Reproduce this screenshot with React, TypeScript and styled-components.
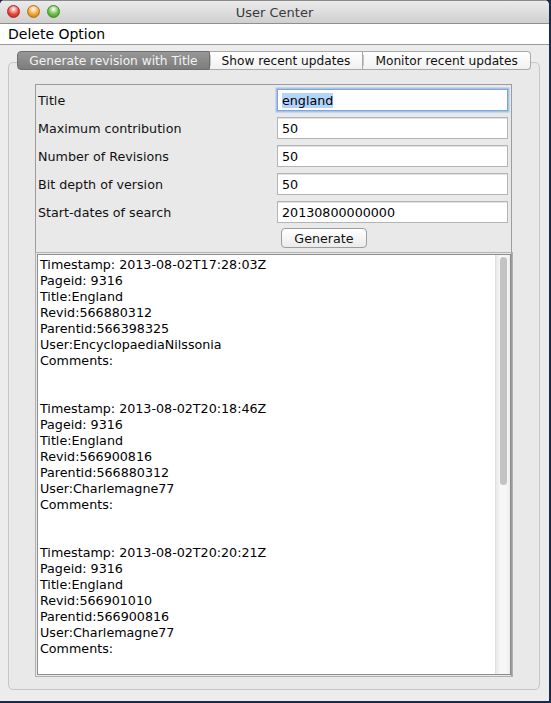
import React from 'react';
import styled, { createGlobalStyle } from 'styled-components';

const GlobalStyle = createGlobalStyle`
  html, body {
    margin: 0;
    padding: 0;
    background: #1b2a4a;
  }
  body {
    width: 551px;
    height: 703px;
    overflow: hidden;
    font-family: "DejaVu Sans", "Liberation Sans", sans-serif;
  }
`;

const Window = styled.div`
  width: 549px;
  height: 701px;
  display: flex;
  flex-direction: column;
  background: #ececec;
  border-radius: 5px 5px 0 0;
  overflow: hidden;
`;

const TitleBar = styled.div`
  height: 22px;
  flex: none;
  display: flex;
  align-items: center;
  justify-content: center;
  position: relative;
  background: linear-gradient(#ebebeb, #cfcfcf);
  border-top: 1px solid #8a8a8a;
  border-bottom: 1px solid #8f8f8f;
  font-size: 13px;
  color: #3a3a3a;
`;

const Lights = styled.div`
  position: absolute;
  left: 7px;
  top: 4px;
  display: flex;
  gap: 7px;
`;

const Light = styled.span<{ $c: string; $d: string }>`
  width: 13px;
  height: 13px;
  border-radius: 50%;
  box-sizing: border-box;
  border: 1px solid ${p => p.$d};
  background: radial-gradient(circle at 50% 30%, #fff 0%, ${p => p.$c} 55%, ${p => p.$d} 100%);
`;

const MenuBar = styled.div`
  height: 20px;
  flex: none;
  background: #fff;
  border-bottom: 1px solid #9a9a9a;
  display: flex;
  align-items: center;
  padding-left: 8px;
  font-size: 14px;
  color: #000;
`;

const Body = styled.div`
  flex: 1;
  min-height: 0;
  display: flex;
  flex-direction: column;
  padding: 6px 9px 11px 8px;
`;

const Tabs = styled.div`
  display: flex;
  align-self: center;
  position: relative;
  z-index: 1;
  height: 19px;
  flex: none;
`;

const Tab = styled.div<{ $active?: boolean; $first?: boolean; $last?: boolean }>`
  display: flex;
  align-items: center;
  padding: 0 ${p => (p.$first ? 11 : 12)}px;
  font-size: 12.2px;
  box-sizing: border-box;
  border: 1px solid ${p => (p.$active ? '#6e6e6e' : '#a9a9a9')};
  border-left: ${p => (p.$first ? undefined : 'none')};
  border-radius: ${p => (p.$first ? '4px 0 0 4px' : p.$last ? '0 4px 4px 0' : '0')};
  background: ${p => (p.$active ? 'linear-gradient(#979797, #7d7d7d)' : 'linear-gradient(#ffffff, #f1f1f1)')};
  color: ${p => (p.$active ? '#f2f2f2' : '#111')};
  position: relative;
  &::before {
    content: '';
    display: ${p => (p.$first || p.$active ? 'none' : 'block')};
    position: absolute;
    left: 0;
    top: 3px;
    bottom: 3px;
    width: 1px;
    background: #c4c4c4;
  }
`;

const TabPane = styled.div`
  flex: 1;
  min-height: 0;
  margin-top: -8px;
  border: 1px solid #c6c6c6;
  border-radius: 5px;
  background: #e9e9e9;
  display: flex;
  flex-direction: column;
  padding: 21px 27px 12px 26px;
`;

const Panel = styled.div`
  flex: 1;
  min-height: 0;
  border: 1px solid #9c9c9c;
  display: flex;
  flex-direction: column;
  padding: 4px 0 0 1px;
`;

const Form = styled.div`
  display: grid;
  grid-template-columns: 240px 231px;
  row-gap: 6px;
  padding-right: 4px;
  align-items: center;
`;

const Label = styled.div`
  font-size: 12.7px;
  color: #111;
  padding-left: 1px;
`;

const Input = styled.div<{ $focus?: boolean }>`
  height: 22px;
  box-sizing: border-box;
  background: #fff;
  border: 1px solid ${p => (p.$focus ? '#7ea6d6' : '#b4b4b4')};
  box-shadow: ${p => (p.$focus ? '0 0 0 1.5px #a6c4ea' : 'inset 0 1px 0 #e2e2e2')};
  display: flex;
  align-items: center;
  padding-left: 4px;
  font-size: 12.7px;
  color: #000;
`;

const Selected = styled.span`
  background: #b3d4fd;
`;

const ButtonRow = styled.div`
  display: flex;
  padding-left: 244px;
  margin-top: 5px;
`;

const Button = styled.div`
  width: 86px;
  height: 20px;
  box-sizing: border-box;
  border: 1px solid #9d9d9d;
  border-radius: 4px;
  background: linear-gradient(#ffffff, #ebebeb);
  display: flex;
  align-items: center;
  justify-content: center;
  font-size: 12.7px;
  color: #111;
`;

const TextArea = styled.div`
  flex: 1;
  min-height: 0;
  margin: 6px 0 1px;
  border: 1px solid #8c8c8c;
  outline: 1px solid #b0b0b0;
  outline-offset: 1px;
  background: #fff;
  display: flex;
  overflow: hidden;
`;

const Log = styled.div`
  flex: 1;
  min-height: 0;
  padding: 2px 0 0 2px;
  font-size: 12.7px;
  line-height: 16px;
  color: #000;
  white-space: pre;
  overflow: hidden;
`;

const Track = styled.div`
  width: 15px;
  flex: none;
  background: linear-gradient(90deg, #e8e8e8, #f7f7f7 30%, #f7f7f7 70%, #ededed);
  border-left: 1px solid #e0e0e0;
  padding: 2px 3px 0 4px;
  box-sizing: border-box;
`;

const Thumb = styled.div`
  height: 228px;
  border-radius: 4px;
  background: #c3c3c3;
`;

const records = [
  ['2013-08-02T17:28:03Z', '566880312', '566398325', 'EncyclopaediaNilssonia'],
  ['2013-08-02T20:18:46Z', '566900816', '566880312', 'Charlemagne77'],
  ['2013-08-02T20:20:21Z', '566901010', '566900816', 'Charlemagne77'],
];

const fields = [
  { label: 'Title', value: 'england', focus: true },
  { label: 'Maximum contribution', value: '50' },
  { label: 'Number of Revisions', value: '50' },
  { label: 'Bit depth of version', value: '50' },
  { label: 'Start-dates of search', value: '20130800000000' },
];

const App: React.FC = () => {
  const logText = records
    .map(([ts, revid, parent, user]) =>
      [
        `Timestamp: ${ts}`,
        'Pageid: 9316',
        'Title:England',
        `Revid:${revid}`,
        `Parentid:${parent}`,
        `User:${user}`,
        'Comments:',
        '',
        '',
      ].join('\n')
    )
    .join('\n');

  return (
    <>
      <GlobalStyle />
      <Window>
        <TitleBar>
          <Lights>
            <Light $c="#e8453c" $d="#a52a22" />
            <Light $c="#f0a531" $d="#b0711a" />
            <Light $c="#6cbe45" $d="#3f8a25" />
          </Lights>
          User Center
        </TitleBar>
        <MenuBar>Delete Option</MenuBar>
        <Body>
          <Tabs>
            <Tab $active $first>Generate revision with Title</Tab>
            <Tab>Show recent updates</Tab>
            <Tab $last>Monitor recent updates</Tab>
          </Tabs>
          <TabPane>
            <Panel>
              <Form>
                {fields.map(f => (
                  <React.Fragment key={f.label}>
                    <Label>{f.label}</Label>
                    <Input $focus={f.focus}>
                      {f.focus ? <Selected>{f.value}</Selected> : f.value}
                    </Input>
                  </React.Fragment>
                ))}
              </Form>
              <ButtonRow>
                <Button>Generate</Button>
              </ButtonRow>
              <TextArea>
                <Log>{logText}</Log>
                <Track>
                  <Thumb />
                </Track>
              </TextArea>
            </Panel>
          </TabPane>
        </Body>
      </Window>
    </>
  );
};

export default App;
